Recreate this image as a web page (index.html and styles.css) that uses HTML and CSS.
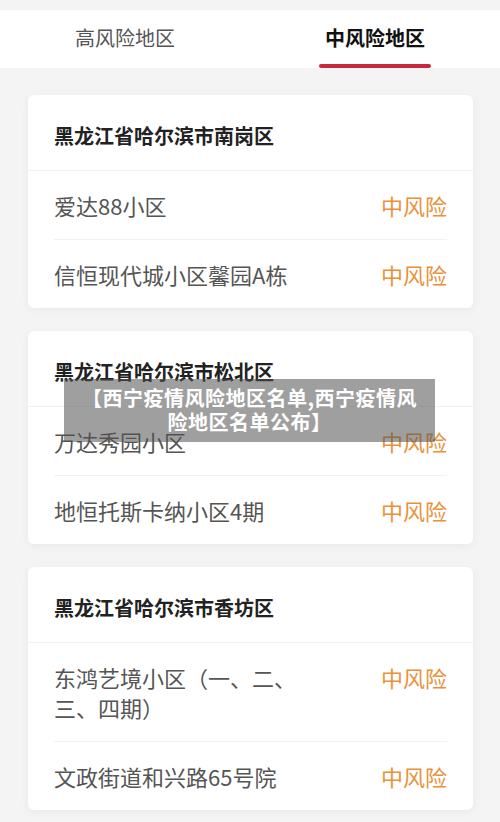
FILE: index.html
```html
<!DOCTYPE html>
<html lang="zh-CN">
<head>
  <meta charset="UTF-8" />
  <meta name="viewport" content="width=device-width, initial-scale=1.0"/>
  <title>中风险地区</title>
  <link rel="stylesheet" href="styles.css">
</head>
<body>

  <div class="tabs">
    <div class="tab">高风险地区</div>
    <div class="tab active">中风险地区</div>
  </div>

  <div class="list">
    <div class="card">
      <div class="card-title">黑龙江省哈尔滨市南岗区</div>
      <div class="row">
        <span class="name">爱达88小区</span>
        <span class="level">中风险</span>
      </div>
      <div class="row">
        <span class="name">信恒现代城小区馨园A栋</span>
        <span class="level">中风险</span>
      </div>
    </div>

    <div class="card">
      <div class="card-title">黑龙江省哈尔滨市松北区</div>
      <div class="row">
        <span class="name">万达秀园小区</span>
        <span class="level">中风险</span>
      </div>
      <div class="row">
        <span class="name">地恒托斯卡纳小区4期</span>
        <span class="level">中风险</span>
      </div>
    </div>

    <div class="card">
      <div class="card-title">黑龙江省哈尔滨市香坊区</div>
      <div class="row">
        <span class="name">东鸿艺境小区（一、二、三、四期）</span>
        <span class="level">中风险</span>
      </div>
      <div class="row">
        <span class="name">文政街道和兴路65号院</span>
        <span class="level">中风险</span>
      </div>
    </div>
  </div>

  <!-- caption laid over the page -->
  <div class="caption">【西宁疫情风险地区名单,西宁疫情风险地区名单公布】</div>

</body>
</html>
```

FILE: styles.css
```css
* {
  box-sizing: border-box;
  margin: 0;
  padding: 0;
  font-family: "Noto Sans CJK SC", "Noto Sans", sans-serif;
}

body {
  background: #f4f4f4;
  width: 500px;
  height: 822px;
  overflow: hidden;
  position: relative;
  padding-top: 10px;
}

.tabs {
  display: flex;
  background: white;
  height: 58px;
}

.tab {
  flex: 1;
  display: flex;
  justify-content: center;
  align-items: center;
  font-size: 20px;
  color: #555;
  position: relative;
  padding-bottom: 4px;
}

.tab.active {
  color: #111;
  font-weight: bold;
}

.tab.active::after {
  content: "";
  position: absolute;
  left: 69px;
  right: 69px;
  bottom: 0;
  height: 4px;
  border-radius: 2px;
  background: #c8283c;
}

.list {
  display: flex;
  flex-direction: column;
  gap: 23px;
  padding: 27px 27px 0 28px;
}

.card {
  background: white;
  border-radius: 6px;
  box-shadow: 0 2px 10px rgba(0,0,0,0.05);
}

.card-title {
  padding: 29px 26px 22px;
  font-size: 20px;
  line-height: 24px;
  font-weight: bold;
  color: #222;
  border-bottom: 1px solid #f1f1f1;
}

.row {
  display: flex;
  justify-content: space-between;
  align-items: flex-start;
  margin: 0 26px;
  padding: 19px 0;
  font-size: 22px;
  line-height: 30px;
}

.row + .row {
  border-top: 1px solid #f1f1f1;
}

.name {
  color: #555;
  max-width: 252px;
}

.level {
  color: #e8913a;
  white-space: nowrap;
}

.caption {
  position: absolute;
  top: 379px;
  left: 64px;
  width: 371px;
  height: 63px;
  padding: 7px 16px;
  background: rgba(80,80,80,0.55);
  color: white;
  font-size: 20px;
  line-height: 24px;
  font-weight: bold;
  letter-spacing: 0.5px;
  text-align: center;
}
```
